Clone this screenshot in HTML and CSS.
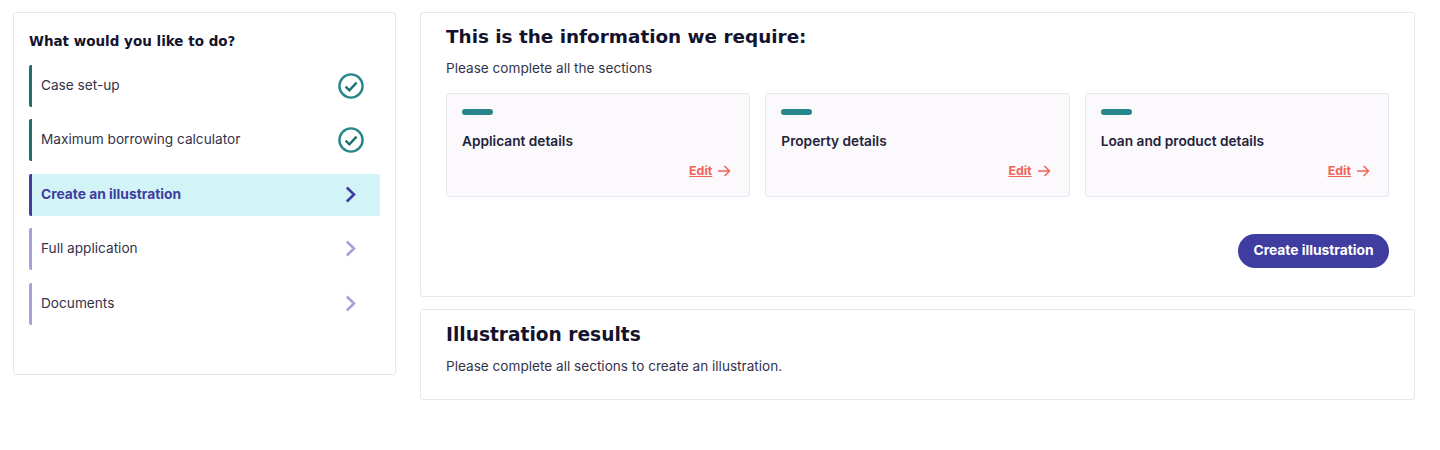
FILE: index.html
```html
<!DOCTYPE html>
<html lang="en">
<head>
    <meta charset="UTF-8">
    <title>Create an illustration</title>
    <link rel="stylesheet" href="styles.css">
</head>
<body>
<div class="page">
    <aside class="card sideCard">
        <h3 class="sideTitle">What would you like to do?</h3>
        <ul class="steps">
            <li class="step done">
                <span class="stepLabel">Case set-up</span>
                <svg class="tick" width="28" height="28" viewBox="0 0 28 28"><circle cx="14" cy="14" r="11.6" fill="none" stroke="#27868a" stroke-width="2.4"/><path d="M8.6 14.6l3.8 3.7 7.2-7.6" fill="none" stroke="#1d6f72" stroke-width="2.4"/></svg>
            </li>
            <li class="step done">
                <span class="stepLabel">Maximum borrowing calculator</span>
                <svg class="tick" width="28" height="28" viewBox="0 0 28 28"><circle cx="14" cy="14" r="11.6" fill="none" stroke="#27868a" stroke-width="2.4"/><path d="M8.6 14.6l3.8 3.7 7.2-7.6" fill="none" stroke="#1d6f72" stroke-width="2.4"/></svg>
            </li>
            <li class="step current">
                <span class="stepLabel">Create an illustration</span>
                <svg class="chevron" width="12" height="17" viewBox="0 0 12 17"><path d="M1.8 1.5L9 8.5l-7.2 7" fill="none" stroke="#3f3da0" stroke-width="2.6"/></svg>
            </li>
            <li class="step todo">
                <span class="stepLabel">Full application</span>
                <svg class="chevron" width="12" height="17" viewBox="0 0 12 17"><path d="M1.8 1.5L9 8.5l-7.2 7" fill="none" stroke="#a6a2d8" stroke-width="2.6"/></svg>
            </li>
            <li class="step todo">
                <span class="stepLabel">Documents</span>
                <svg class="chevron" width="12" height="17" viewBox="0 0 12 17"><path d="M1.8 1.5L9 8.5l-7.2 7" fill="none" stroke="#a6a2d8" stroke-width="2.6"/></svg>
            </li>
        </ul>
    </aside>

    <main class="mainCol">
        <section class="card infoCard">
            <h2 class="sectionTitle">This is the information we require:</h2>
            <p class="sectionText">Please complete all the sections</p>
            <div class="tiles">
                <div class="tile">
                    <div class="tileBar"></div>
                    <h4 class="tileTitle">Applicant details</h4>
                    <div class="tileFoot">
                        <a class="editLink" href="#">Edit</a>
                        <svg width="13" height="12" viewBox="0 0 13 12"><path d="M0 6H11.5M6.5 1l5 5-5 5" fill="none" stroke="#f0645a" stroke-width="1.5"/></svg>
                    </div>
                </div>
                <div class="tile">
                    <div class="tileBar"></div>
                    <h4 class="tileTitle">Property details</h4>
                    <div class="tileFoot">
                        <a class="editLink" href="#">Edit</a>
                        <svg width="13" height="12" viewBox="0 0 13 12"><path d="M0 6H11.5M6.5 1l5 5-5 5" fill="none" stroke="#f0645a" stroke-width="1.5"/></svg>
                    </div>
                </div>
                <div class="tile">
                    <div class="tileBar"></div>
                    <h4 class="tileTitle">Loan and product details</h4>
                    <div class="tileFoot">
                        <a class="editLink" href="#">Edit</a>
                        <svg width="13" height="12" viewBox="0 0 13 12"><path d="M0 6H11.5M6.5 1l5 5-5 5" fill="none" stroke="#f0645a" stroke-width="1.5"/></svg>
                    </div>
                </div>
            </div>
            <div class="actions">
                <button class="primaryBtn">Create illustration</button>
            </div>
        </section>

        <section class="card resultCard">
            <h2 class="sectionTitle">Illustration results</h2>
            <p class="sectionText">Please complete all sections to create an illustration.</p>
        </section>
    </main>
</div>
</body>
</html>
```

FILE: styles.css
```css
* {
    box-sizing: border-box;
}

body {
    margin: 0;
    background-color: #fff;
    color: #34334a;
    font-family: "Inter", "Liberation Sans", sans-serif;
}

h2, h3, h4, p, ul {
    margin: 0;
    padding: 0;
}

.page {
    display: grid;
    grid-template-columns: 383px 995px;
    column-gap: 24px;
    align-items: start;
    padding: 12px 0 0 13px;
}

.card {
    border: 1px solid #e6e6f0;
    border-radius: 3px;
    background-color: #fff;
}

.sideCard {
    height: 363px;
    padding: 19px 15px 0;
}

.sideTitle {
    font-family: "DejaVu Sans", sans-serif;
    font-size: 13.5px;
    line-height: 18px;
    font-weight: 700;
    color: #14132e;
}

.steps {
    list-style: none;
    display: flex;
    flex-direction: column;
    row-gap: 12.4px;
    margin-top: 15px;
}

.step {
    display: flex;
    align-items: center;
    justify-content: space-between;
    height: 42px;
    padding-left: 9px;
    border-left: 3px solid;
    border-radius: 2px;
    font-size: 13.65px;
}

.stepLabel {
    margin-bottom: 2px;
}

.step.done {
    border-left-color: #1d6f72;
}

.step.done .tick {
    margin-right: 15px;
}

.step.current {
    border-left-color: #3f3da0;
    background-color: #d2f4f7;
    color: #3f3da0;
    font-weight: 700;
    font-size: 13.8px;
}

.step.todo {
    border-left-color: #a6a2d8;
}

.chevron {
    margin-right: 23px;
    margin-bottom: 1px;
}

.mainCol {
    display: flex;
    flex-direction: column;
    row-gap: 12px;
}

.infoCard {
    height: 285px;
    padding: 12px 25px 0;
}

.resultCard {
    height: 91px;
    padding: 13px 25px 0;
}

.sectionTitle {
    font-family: "DejaVu Sans", sans-serif;
    font-size: 18.4px;
    line-height: 24px;
    font-weight: 700;
    color: #14132e;
}

.sectionText {
    margin-top: 9px;
    font-size: 13.6px;
    line-height: 20px;
}

.tiles {
    display: grid;
    grid-template-columns: repeat(3, 1fr);
    column-gap: 15px;
    margin-top: 15px;
}

.tile {
    height: 104px;
    padding: 15px 18px 0 15px;
    border: 1px solid #e6e6f0;
    border-radius: 3px;
    background-color: #fbf9fb;
}

.tileBar {
    width: 31px;
    height: 6px;
    border-radius: 3px;
    background-color: #27868a;
}

.tileTitle {
    margin-top: 16px;
    font-size: 13.7px;
    line-height: 20px;
    font-weight: 600;
    color: #24233a;
}

.tileFoot {
    display: flex;
    justify-content: flex-end;
    align-items: center;
    column-gap: 6px;
    margin-top: 12px;
}

.editLink {
    font-size: 12.4px;
    line-height: 16px;
    font-weight: 700;
    color: #f0645a;
}

.actions {
    display: flex;
    justify-content: flex-end;
    margin-top: 37px;
}

.primaryBtn {
    height: 34px;
    width: 151px;
    padding: 0 0 2px;
    border: none;
    border-radius: 17px;
    background-color: #3f3da0;
    color: #fff;
    font-family: inherit;
    font-size: 13.8px;
    font-weight: 700;
}

.resultCard .sectionTitle {
    font-size: 18.6px;
}
```
